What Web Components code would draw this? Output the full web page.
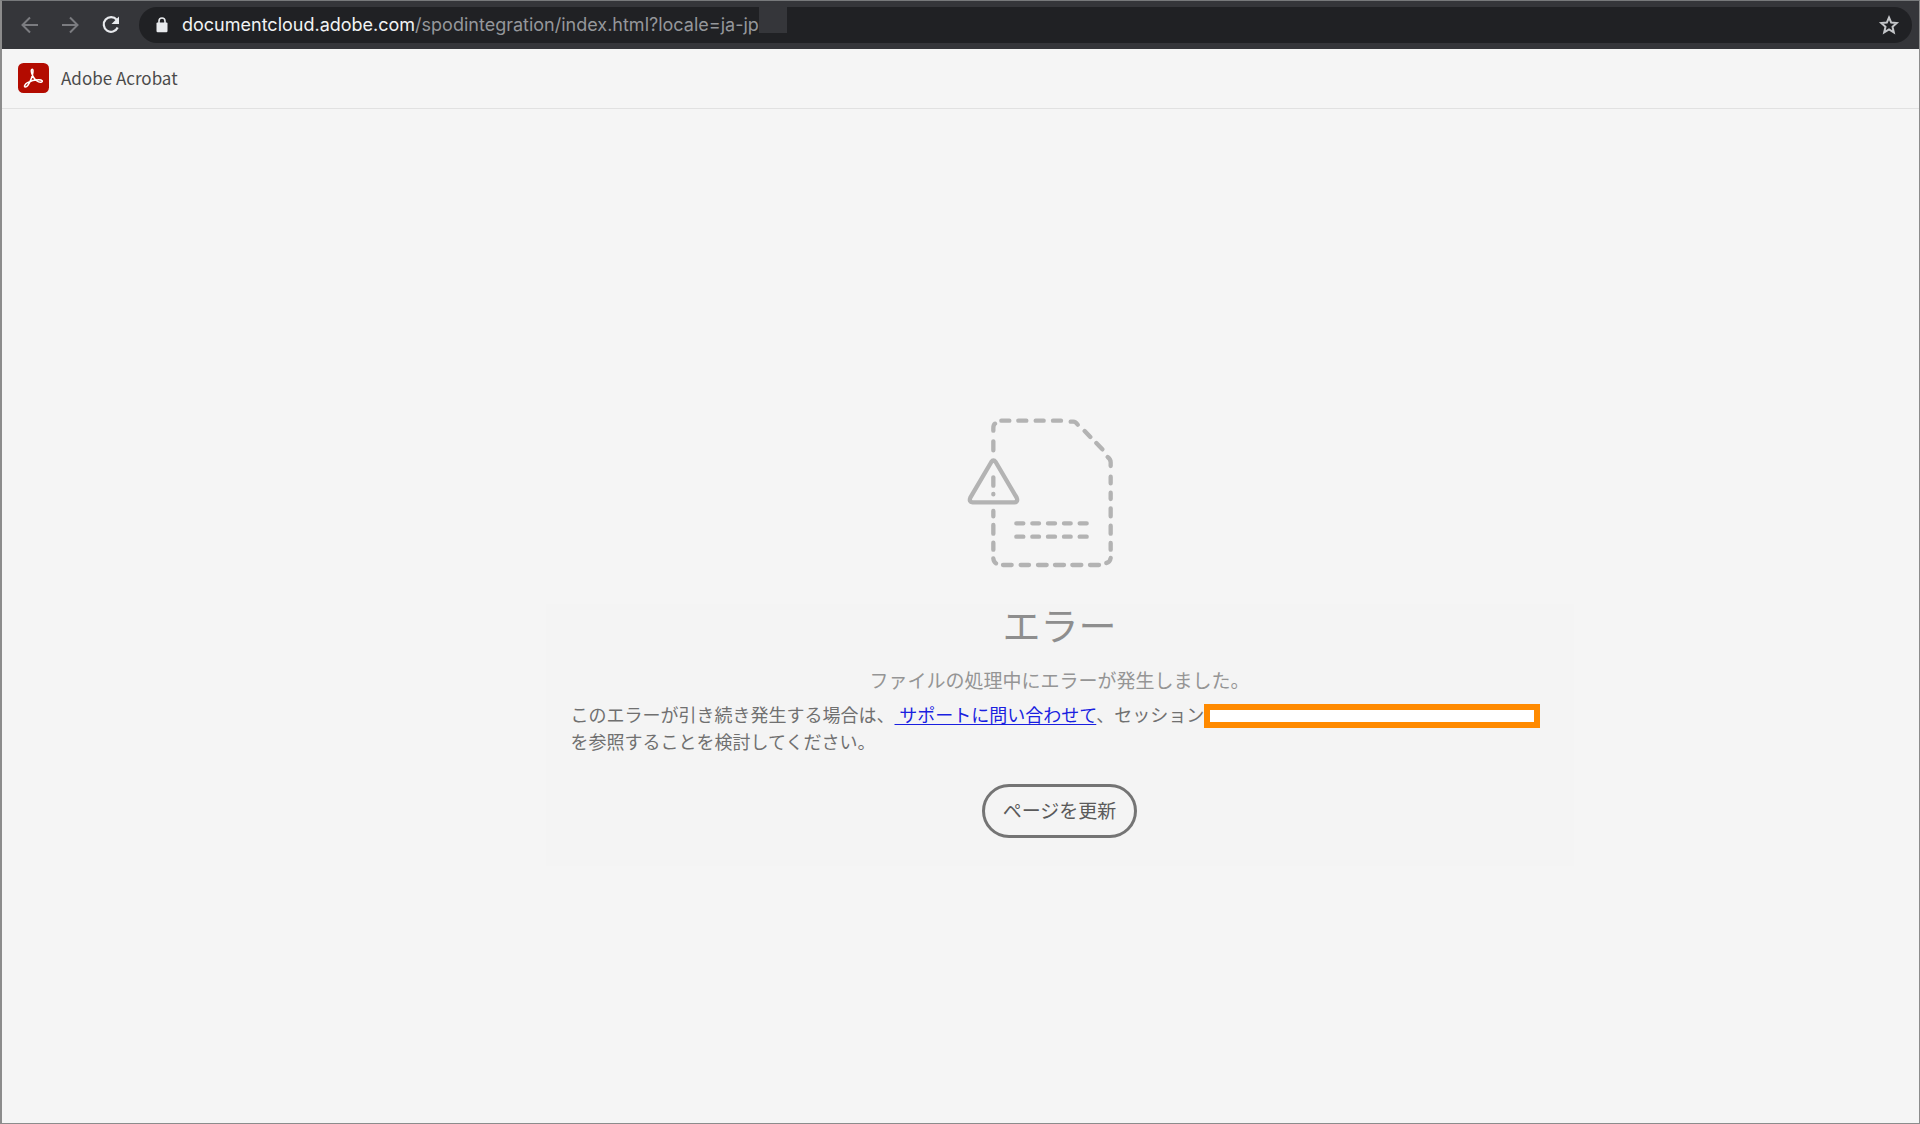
<!DOCTYPE html>
<html lang="ja">
<head>
<meta charset="utf-8">
<title>Adobe Acrobat</title>
<style>
html, body { margin: 0; height: 100%; }
body { background: #f5f5f5; font-family: "Noto Sans", "Noto Sans CJK JP", sans-serif; }
</style>
</head>
<body>
<browser-window>
  <browser-toolbar slot="toolbar">
    <address-bar><span slot="host">documentcloud.adobe.com</span><span slot="path">/spodintegration/index.html?locale=</span><span slot="value">ja-jp</span></address-bar>
  </browser-toolbar>
  <app-header>Adobe Acrobat</app-header>
  <error-page>
    <span slot="title">エラー</span>
    <span slot="summary">ファイルの処理中にエラーが発生しました。</span>
    <error-detail slot="detail"></error-detail>
    <pill-button slot="action">ページを更新</pill-button>
  </error-page>
</browser-window>
<script>
function define(name, html) {
  const template = document.createElement('template');
  template.innerHTML = html;
  customElements.define(name, class extends HTMLElement {
    constructor() {
      super();
      this.attachShadow({ mode: 'open' }).append(template.content.cloneNode(true));
    }
  });
}

define('browser-window', `
<style>
:host { display: flex; flex-direction: column; box-sizing: border-box; min-height: 100vh;
  border: 1px solid #8c8c8c; border-top-color: #77797b; border-left: 2px solid #8c8c8c; background: #f5f5f5; }
</style>
<slot name="toolbar"></slot><slot></slot>`);

define('browser-toolbar', `
<style>
:host { display: flex; align-items: center; height: 48px; box-sizing: border-box; padding: 0 7px 0 18px; background: #35363a; }
nav { display: flex; gap: 16px; margin-right: 15px; }
button { display: block; border: 0; padding: 0; background: none; width: 24px; height: 24px; color: #7b7c80; }
button:last-child { color: #e8eaed; }
svg { display: block; }
::slotted(*) { flex: 1; }
</style>
<nav>
<button aria-label="戻る"><svg width="24" height="24" viewBox="0 0 24 24" fill="none" stroke="currentColor" stroke-width="2"><path d="M18 12H3M10 4.5 2.5 12l7.500 7.500"/></svg></button>
<button aria-label="進む"><svg width="24" height="24" viewBox="0 0 24 24" fill="none" stroke="currentColor" stroke-width="2"><path d="M2 12h15M10 4.500 17.500 12 10 19.500"/></svg></button>
<button aria-label="再読み込み"><svg width="24" height="24" viewBox="0 0 24 24" fill="none" stroke="currentColor" stroke-width="2.200"><path d="M16.700 6.800A7.300 7.300 0 1 0 17.700 14.500"/><path d="M19 3.500v7.500h-7.500z" fill="currentColor" stroke="none"/></svg></button>
</nav>
<slot></slot>`);

define('address-bar', `
<style>
:host { display: flex; align-items: center; height: 36px; box-sizing: border-box; padding: 0 12px 0 17px; border-radius: 18px;
  background: #202124; color: #95979b; font: 18px/24px Inter, "Liberation Sans", sans-serif; }
.lock { margin-right: 14px; flex: none; }
.url { display: flex; flex: 1; white-space: pre; align-self: stretch; align-items: center; }
.host { color: #f1f3f4; }
.mask { align-self: flex-start; width: 28px; height: 26px; background: #35363a; }
button { border: 0; padding: 0; background: none; color: #c4c6c9; }
svg { display: block; }
</style>
<svg class="lock" width="12" height="16" viewBox="0 0 12 16" fill="#e8eaed"><path d="M1.500 5.500h9q1 0 1 1V14q0 1.200-1.200 1.200H1.700Q.5 15.200.5 14V6.500q0-1 1-1z"/><path d="M3 6V4a3 3 0 0 1 6 0v2" fill="none" stroke="#e8eaed" stroke-width="1.600"/></svg>
<div class="url" role="textbox" aria-label="アドレス"><span class="host"><slot name="host"></slot></span><span><slot name="path"></slot></span><span><slot name="value"></slot></span><span class="mask"></span></div>
<button aria-label="ブックマーク"><svg width="22" height="22" viewBox="0 0 22 22" fill="none" stroke="currentColor" stroke-width="2"><path d="M11 3.500l2.200 5.100 5.500.5-4.200 3.700 1.300 5.500L11 15.400l-4.800 2.900 1.300-5.500-4.200-3.700 5.500-.5z"/></svg></button>`);

define('app-header', `
<style>
:host { display: flex; align-items: center; gap: 12px; height: 60px; box-sizing: border-box; padding: 0 16px 2px;
  border-bottom: 1px solid #e1e1e1; color: #4b4b4b; font: 17px/24px "Noto Sans CJK JP", sans-serif; }
</style>
<svg width="31" height="30" viewBox="0 0 31 30"><rect width="31" height="30" rx="5.500" fill="#b30b00"/><path d="M14.200 6.300c-1.700.2-.7 4.100.8 7 1.700 3.300 5.200 6.500 8.100 6 2.300-.5 1.300-2.600-2.600-2.500-3.700.1-7.700 1.100-11 2.900-2.700 1.500-3.800 4-2.400 4.300 2 .4 4.600-4.300 6.300-8.600 1.200-3.200 2.500-9.300.8-9.100z" fill="none" stroke="#fff" stroke-width="1.500"/></svg>
<span><slot></slot></span>`);

define('file-error-art', `
<style>:host { display: block; } svg { display: block; }</style>
<svg width="186" height="150" viewBox="81 54 558 450" fill="none" stroke="#b3b3b3" stroke-width="13" stroke-linecap="round" stroke-linejoin="round">
<path d="M160 92V85Q160 74 165 71M184 62h24M235 62h24M287 62h24M339 62h24M392 65h8q7 0 13 9M434 93l17 18M469 129l18 19M503 171q9 7 9 16v11M512 230v20M512 278v19M512 325v24M512 377v24M512 429v20M512 474q-2 13-13 15M477 495h-27M424 495h-27M372 495h-27M320 495h-26M267 495h-25M215 495h-26M168 490q-7-4-8-15M160 449v-21M160 401v-26M160 349v-16M160 151v-27"/>
<path d="M229 370h21M277 370h20M324 370h21M372 370h20M419 370h21M229 410h21M277 410h20M324 410h21M372 410h20M419 410h21"/>
<path d="M154 186Q160 177 167 186L230 293Q235 306 223 307H98Q86 306 91 293ZM160 232v25M160 282v1"/>
</svg>`);

define('error-page', `
<style>
:host { display: flex; flex-direction: column; align-items: center; flex: 1; padding: 309px 0 40px 198px; }
section { display: flex; flex-direction: column; align-items: center; box-sizing: border-box; width: 1028px; max-width: 100%;
  margin-top: 36px; padding: 0 20px 28px; background: #f4f4f4; }
h1 { margin: 0; font-size: 38px; line-height: 42px; font-weight: 400; color: #8e8e8e; }
p { margin: 21px 0 7px; font-size: 19px; line-height: 28px; color: #959595; }
.action { margin-top: 28px; }
</style>
<file-error-art></file-error-art>
<section>
<h1><slot name="title"></slot></h1>
<p><slot name="summary"></slot></p>
<slot name="detail"></slot>
<div class="action"><slot name="action"></slot></div>
</section>`);

define('error-detail', `
<style>
:host { display: block; width: 100%; max-width: 978px; font-size: 18px; line-height: 27px; color: #707070; }
p { margin: 0; }
a { color: #1a1fe0; white-space: pre; text-decoration: underline; text-decoration-thickness: 1px; text-underline-offset: 2px; }
.session { display: inline-block; vertical-align: -6px; box-sizing: border-box; width: 336px; height: 24px; border: 6px solid #ff8a00; background: #fff; }
</style>
<p>このエラーが引き続き発生する場合は、<a href="#support"> サポートに問い合わせて</a>、セッション<span class="session"></span><br>を参照することを検討してください。</p>`);

define('pill-button', `
<style>
:host { display: block; }
button { display: block; height: 54px; padding: 0 18px; border: 3px solid #747474; border-radius: 27px; background: none;
  color: #5a5a5a; font: inherit; font-size: 19px; line-height: 28px; }
</style>
<button type="button"><slot></slot></button>`);
</script>
</body>
</html>
